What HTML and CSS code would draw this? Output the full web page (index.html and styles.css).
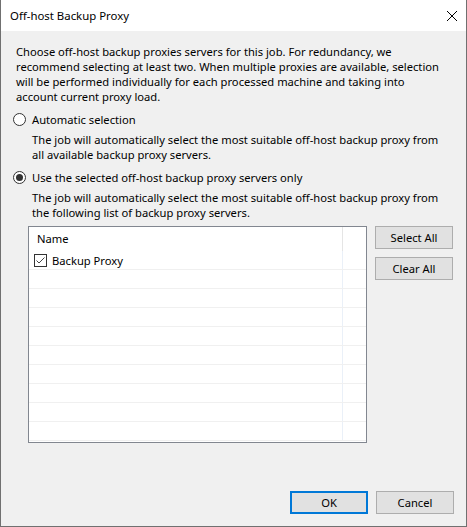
FILE: index.html
```html
<!DOCTYPE html>
<html lang="en">
<head>
<meta charset="utf-8">
<title>Off-host Backup Proxy</title>
<link rel="stylesheet" href="styles.css">
</head>
<body>
<div class="window">
  <div class="titlebar">
    <span class="title">Off-host Backup Proxy</span>
    <span class="close" aria-label="Close">
      <svg width="10" height="10" viewBox="0 0 10 10"><path d="M0 0L10 10M10 0L0 10" stroke="#000" stroke-width="1" fill="none"/></svg>
    </span>
  </div>
  <div class="content">
    <p class="intro">Choose off-host backup proxies servers for this job. For redundancy, we<br>recommend selecting at least two. When multiple proxies are available, selection<br>will be performed individually for each processed machine and taking into<br>account current proxy load.</p>

    <div class="radio-row"><span class="radio"></span><span>Automatic selection</span></div>
    <p class="desc">The job will automatically select the most suitable off-host backup proxy from<br>all available backup proxy servers.</p>

    <div class="radio-row"><span class="radio checked"></span><span>Use the selected off-host backup proxy servers only</span></div>
    <p class="desc">The job will automatically select the most suitable off-host backup proxy from<br>the following list of backup proxy servers.</p>

    <div class="list-area">
      <div class="list">
        <div class="list-header"><span class="cell-name">Name</span><span class="cell-rest"></span></div>
        <div class="row"><span class="cell-name"><span class="check"><svg width="13" height="13" viewBox="0 0 13 13"><rect x="0.5" y="0.5" width="12" height="12" fill="#fff" stroke="#333"/><path d="M2.5 6.5L5 9L10.5 3.5" fill="none" stroke="#444" stroke-width="1"/></svg></span>Backup Proxy</span><span class="cell-rest"></span></div>
        <div class="row"><span class="cell-name"></span><span class="cell-rest"></span></div>
        <div class="row"><span class="cell-name"></span><span class="cell-rest"></span></div>
        <div class="row"><span class="cell-name"></span><span class="cell-rest"></span></div>
        <div class="row"><span class="cell-name"></span><span class="cell-rest"></span></div>
        <div class="row"><span class="cell-name"></span><span class="cell-rest"></span></div>
        <div class="row"><span class="cell-name"></span><span class="cell-rest"></span></div>
        <div class="row"><span class="cell-name"></span><span class="cell-rest"></span></div>
        <div class="row"><span class="cell-name"></span><span class="cell-rest"></span></div>
        <div class="row"><span class="cell-name"></span><span class="cell-rest"></span></div>
      </div>
      <div class="side-buttons">
        <button class="btn">Select All</button>
        <button class="btn">Clear All</button>
      </div>
    </div>

    <div class="footer">
      <button class="btn primary">OK</button>
      <button class="btn">Cancel</button>
    </div>
  </div>
</div>
</body>
</html>
```

FILE: styles.css
```css
* { box-sizing: border-box; }

html, body {
  margin: 0;
  padding: 0;
  background: #f0f0f0;
}

body {
  font-family: "Segoe UI", "Noto Sans", "Liberation Sans", sans-serif;
  font-size: 11.2px;
  color: #000;
}

.window {
  width: 467px;
  height: 527px;
  display: flex;
  flex-direction: column;
  border-left: 1px solid #707070;
  border-right: 1px solid #707070;
  border-bottom: 1px solid #707070;
  background: #f0f0f0;
}

.titlebar {
  height: 31px;
  flex: none;
  background: #fff;
  display: flex;
  align-items: center;
  justify-content: space-between;
  padding: 0 9px 0 9px;
}

.title {
  font-size: 11.4px;
  line-height: 31px;
  white-space: nowrap;
}

.close {
  display: flex;
  width: 10px;
  height: 10px;
}

.content {
  flex: 1;
  display: flex;
  flex-direction: column;
  padding: 13px 12px 12px 15px;
}

.intro {
  margin: 0;
  line-height: 15px;
  white-space: nowrap;
}

.radio-row {
  margin: 8px 0 0 -3px;
  height: 15px;
  line-height: 15px;
  display: flex;
  align-items: center;
  white-space: nowrap;
}

.radio {
  width: 13px;
  height: 13px;
  border: 1px solid #333;
  border-radius: 50%;
  background: #fff;
  margin-right: 6px;
  display: flex;
  align-items: center;
  justify-content: center;
  flex: none;
}

.radio.checked::after {
  content: "";
  width: 7px;
  height: 7px;
  border-radius: 50%;
  background: #333;
}

.desc {
  margin: 5px 0 0 16px;
  line-height: 15px;
  white-space: nowrap;
}

.list-area {
  margin: 6px 0 0 12px;
  display: flex;
  gap: 8px;
  align-items: flex-start;
}

.list {
  width: 339px;
  height: 217px;
  border: 1px solid #828790;
  background: #fff;
  overflow: hidden;
  flex: none;
}

.list-header {
  height: 24px;
  display: flex;
}

.list-header .cell-name {
  width: 314px;
  border-right: 1px solid #e5e5e5;
  padding-left: 8px;
  line-height: 24px;
}

.row {
  height: 19px;
  display: flex;
  border-bottom: 1px solid #f0f0f0;
}

.row .cell-name {
  width: 314px;
  border-right: 1px solid #eaf0f8;
  padding-left: 5px;
  display: flex;
  align-items: center;
  white-space: nowrap;
}

.cell-rest {
  flex: 1;
}

.check {
  display: flex;
  width: 13px;
  height: 13px;
  margin-right: 5px;
}

.side-buttons {
  display: flex;
  flex-direction: column;
  gap: 8px;
}

.btn {
  width: 78px;
  height: 23px;
  padding: 0;
  margin: 0;
  background: #e1e1e1;
  border: 1px solid #adadad;
  border-radius: 0;
  font-family: inherit;
  font-size: 11.2px;
  color: #000;
}

.btn.primary {
  border: 2px solid #0078d7;
}

.footer {
  margin-top: auto;
  display: flex;
  justify-content: flex-end;
  gap: 8px;
}
```
